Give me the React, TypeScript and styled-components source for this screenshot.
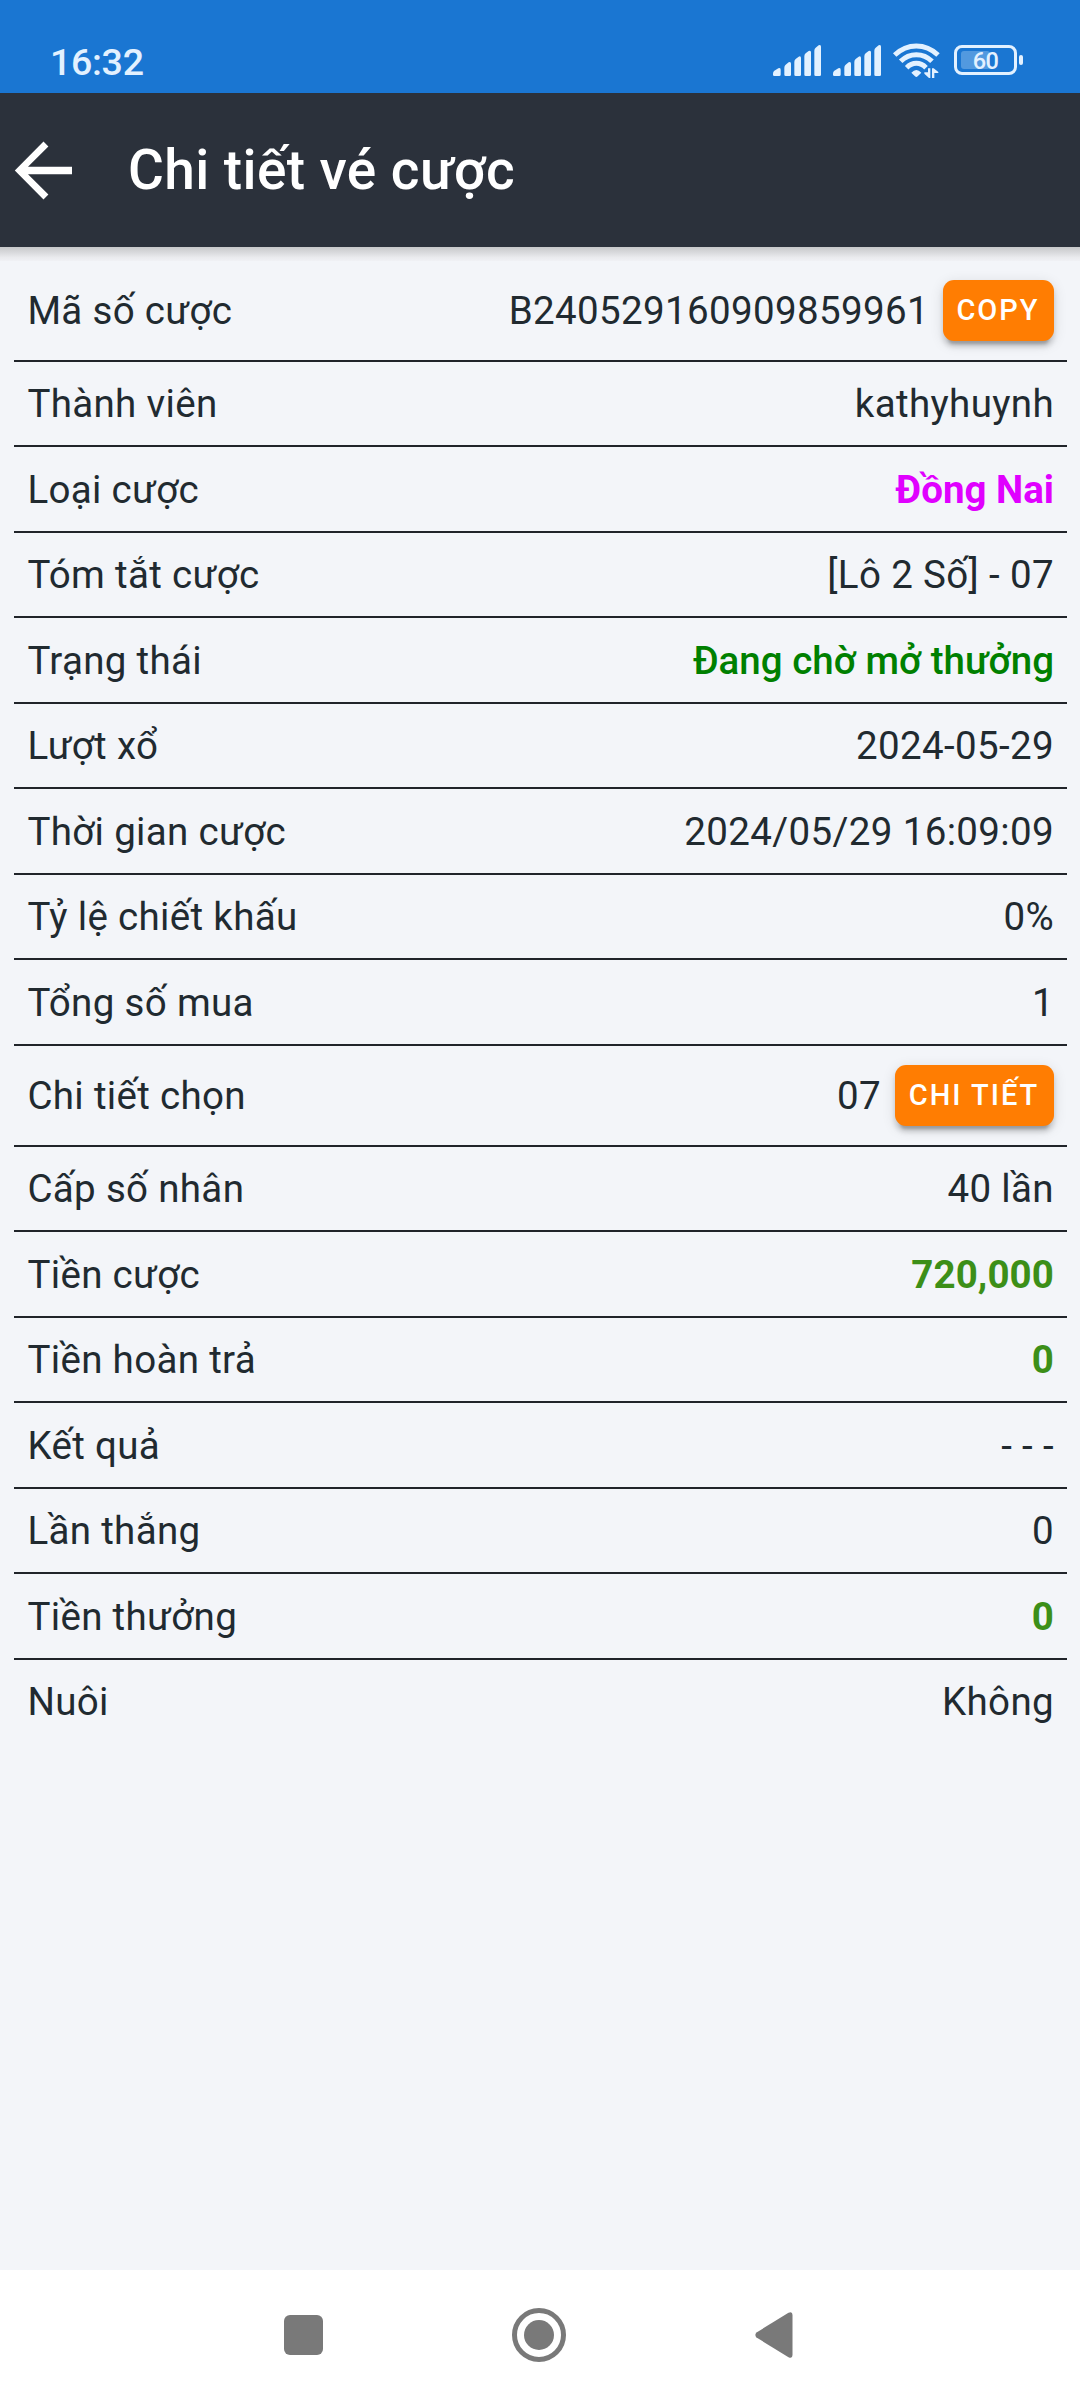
import React from 'react';
import styled, { createGlobalStyle, css } from 'styled-components';

const GlobalStyle = createGlobalStyle`
  * { box-sizing: border-box; }
  body { margin: 0; background: #f3f5f9; font-family: Roboto, "Noto Sans", sans-serif; }
`;

const Screen = styled.div`
  display: flex;
  flex-direction: column;
  width: 1080px;
  height: 2400px;
  background: #f3f5f9;
  overflow: hidden;
`;

const StatusBar = styled.header`
  display: flex;
  flex: none;
  align-items: flex-end;
  justify-content: space-between;
  height: 93px;
  padding: 0 57px 9px 50px;
  background: #1a76d2;
  color: #e3f1ff;
`;

const Clock = styled.time`
  font-size: 37.5px;
  font-weight: 500;
  line-height: 44px;
  letter-spacing: -0.3px;
`;

const StatusIcons = styled.div`
  display: flex;
  align-items: flex-start;
  height: 41px;
  svg { display: block; overflow: visible; }
`;

const Signal = styled.svg`
  width: 48px;
  height: 31px;
  margin: 2px 12px 0 0;
`;

const Wifi = styled.svg`
  width: 47px;
  height: 36px;
  margin-right: 14px;
`;

const Battery = styled.div`
  display: flex;
  align-items: center;
  gap: 2px;
  height: 30px;
  margin-top: 2px;
`;

const BatteryCase = styled.div`
  display: grid;
  width: 63px;
  height: 30px;
  padding: 3px 4px;
  border: 3px solid #e3f1ff;
  border-radius: 8px;
  text-align: center;
`;

const BatteryLevel = styled.span`
  grid-area: 1 / 1;
  width: 29px;
  height: 18px;
  border-radius: 3px;
  background: #5299df;
`;

const BatteryText = styled.span`
  grid-area: 1 / 1;
  font-size: 23.5px;
  font-weight: 500;
  line-height: 20px;
  letter-spacing: -0.5px;
`;

const BatteryNub = styled.span`
  width: 4px;
  height: 10px;
  border-radius: 2px;
  background: #e3f1ff;
`;

const Toolbar = styled.div`
  display: flex;
  flex: none;
  align-items: center;
  height: 154px;
  padding-left: 14px;
  background: #2b313b;
  color: #fff;
`;

const BackButton = styled.button`
  display: block;
  width: 59px;
  height: 59px;
  margin: 0 55px 0 0;
  padding: 0;
  border: 0;
  background: none;
  svg { display: block; }
`;

const Title = styled.h1`
  margin: 0;
  font-size: 55px;
  font-weight: 500;
  line-height: 66px;
  letter-spacing: 0.4px;
`;

const ToolbarShadow = styled.div`
  flex: none;
  height: 14px;
  background: linear-gradient(#c7c8ca, #d9dadd 40%, #eaebee 75%, #f0f1f5);
`;

const Content = styled.main`
  flex: 1;
  padding: 0 13px 0 14px;
  margin-top: -0.1px;
`;

const Row = styled.div<{ $tall?: boolean }>`
  display: flex;
  align-items: center;
  justify-content: space-between;
  height: ${({ $tall }) => ($tall ? 101 : 85.5)}px;
  padding: 1px 13px 0 13.4px;
  border-bottom: 2px solid #20242a;
  color: #212a30;
  font-size: 38.5px;
  line-height: 52px;
  &:last-child { border-bottom-color: transparent; }
`;

const Label = styled.span`
  white-space: nowrap;
  letter-spacing: 0.33px;
`;

type Tone = 'plain' | 'region' | 'status' | 'money';

const tones = {
  plain: css`letter-spacing: 0.36px;`,
  region: css`color: #e000ff; font-weight: 700; letter-spacing: 0;`,
  status: css`color: #008000; font-weight: 500; letter-spacing: 0;`,
  money: css`color: #3c8f18; font-weight: 700; letter-spacing: 0.1px;`,
};

const Value = styled.span<{ $tone: Tone }>`
  display: flex;
  align-items: center;
  white-space: nowrap;
  ${({ $tone }) => tones[$tone]}
`;

const ActionButton = styled.button<{ $width: number }>`
  width: ${({ $width }) => $width}px;
  height: 61px;
  margin: -1px 0 0 14px;
  padding: 0 1px 1px 0;
  border: 0;
  border-radius: 11px;
  background: #ff7d02;
  color: #fff;
  font: 500 29px/34px Roboto, "Noto Sans", sans-serif;
  letter-spacing: 2px;
  box-shadow: 0 8px 3px -5.5px rgba(0, 0, 0, 0.2), 0 5.5px 5.5px rgba(0, 0, 0, 0.14),
    0 3px 14px rgba(0, 0, 0, 0.12);
`;

const NavBar = styled.nav`
  display: flex;
  flex: none;
  align-items: center;
  gap: 189px;
  height: 130px;
  padding-left: 284px;
  background: #fff;
`;

const Recents = styled.span`
  width: 39px;
  height: 40px;
  border-radius: 6px;
  background: #797979;
`;

const Home = styled.span`
  display: grid;
  place-items: center;
  width: 54px;
  height: 54px;
  border: 5px solid #797979;
  border-radius: 50%;
  &::after {
    content: '';
    width: 30px;
    height: 30px;
    border-radius: 50%;
    background: #797979;
  }
`;

interface Entry {
  label: string;
  value: string;
  tone?: Tone;
  action?: { text: string; width: number };
}

const entries: Entry[] = [
  { label: 'Mã số cược', value: 'B240529160909859961', action: { text: 'COPY', width: 111 } },
  { label: 'Thành viên', value: 'kathyhuynh' },
  { label: 'Loại cược', value: 'Đồng Nai', tone: 'region' },
  { label: 'Tóm tắt cược', value: '[Lô 2 Số] - 07' },
  { label: 'Trạng thái', value: 'Đang chờ mở thưởng', tone: 'status' },
  { label: 'Lượt xổ', value: '2024-05-29' },
  { label: 'Thời gian cược', value: '2024/05/29 16:09:09' },
  { label: 'Tỷ lệ chiết khấu', value: '0%' },
  { label: 'Tổng số mua', value: '1' },
  { label: 'Chi tiết chọn', value: '07', action: { text: 'CHI TIẾT', width: 159 } },
  { label: 'Cấp số nhân', value: '40 lần' },
  { label: 'Tiền cược', value: '720,000', tone: 'money' },
  { label: 'Tiền hoàn trả', value: '0', tone: 'money' },
  { label: 'Kết quả', value: '- - -' },
  { label: 'Lần thắng', value: '0' },
  { label: 'Tiền thưởng', value: '0', tone: 'money' },
  { label: 'Nuôi', value: 'Không' },
];

function SignalIcon() {
  const bars = [
    { x: 0, w: 23, top: 69 },
    { x: 34, w: 20, top: 51 },
    { x: 64, w: 20, top: 34 },
    { x: 94, w: 20, top: 17 },
    { x: 124, w: 20, top: 0 },
  ];
  return (
    <Signal viewBox="0 0 144 93">
      {bars.map(({ x, w, top }) => (
        <path
          key={x}
          fill="#e3f1ff"
          d={`M${x} ${top + 17}Q${x} ${top + 11} ${x + 4} ${top + 8}L${x + w - 7} ${top + 1}Q${x + w} ${top - 2} ${x + w} ${top + 5}V89Q${x + w} 93 ${x + w - 4} 93H${x + 4}Q${x} 93 ${x} 89Z`}
        />
      ))}
    </Signal>
  );
}

function WifiIcon() {
  return (
    <Wifi viewBox="0 0 141 108" fill="none" stroke="#e3f1ff" strokeWidth="15">
      <path d="M5 36Q34 9 70 9Q106 9 135 36" />
      <path d="M23 55Q43 35 70 35Q97 35 117 55" />
      <path d="M41 74Q54 61 70 61Q86 61 99 74" />
      <path d="M55 89Q70 73 85 89L74 100Q70 104 66 100Z" fill="#e3f1ff" stroke="none" />
      <path d="M105 76H112V105H108L94 92V88H105Z M117 105H124V90H136V87L122 76H117Z" fill="#e3f1ff" stroke="none" />
    </Wifi>
  );
}

export default function App() {
  return (
    <>
      <GlobalStyle />
      <Screen>
        <StatusBar>
          <Clock>16:32</Clock>
          <StatusIcons>
            <SignalIcon />
            <SignalIcon />
            <WifiIcon />
            <Battery>
              <BatteryCase>
                <BatteryLevel />
                <BatteryText>60</BatteryText>
              </BatteryCase>
              <BatteryNub />
            </Battery>
          </StatusIcons>
        </StatusBar>
        <Toolbar>
          <BackButton aria-label="Back">
            <svg width="59" height="59" viewBox="0 0 59 59">
              <path
                fill="#fff"
                d="M.8 29.5L29.5.4L34.4 5.4L14 25.7H58V33.3H14L34.4 53.6L29.5 58.6Z"
              />
            </svg>
          </BackButton>
          <Title>Chi tiết vé cược</Title>
        </Toolbar>
        <ToolbarShadow />
        <Content>
          {entries.map(({ label, value, tone = 'plain', action }) => (
            <Row key={label} $tall={!!action}>
              <Label>{label}</Label>
              <Value $tone={tone}>
                {value}
                {action && <ActionButton $width={action.width}>{action.text}</ActionButton>}
              </Value>
            </Row>
          ))}
        </Content>
        <NavBar>
          <Recents />
          <Home />
          <svg width="38" height="46" viewBox="0 0 38 46">
            <path
              fill="#797979"
              d="M1.5 20.5L33.5 .8Q37.5 -1 37.5 3V43Q37.5 47 33.5 45.2L1.5 25.5Q-.8 23 1.5 20.5Z"
            />
          </svg>
        </NavBar>
      </Screen>
    </>
  );
}
